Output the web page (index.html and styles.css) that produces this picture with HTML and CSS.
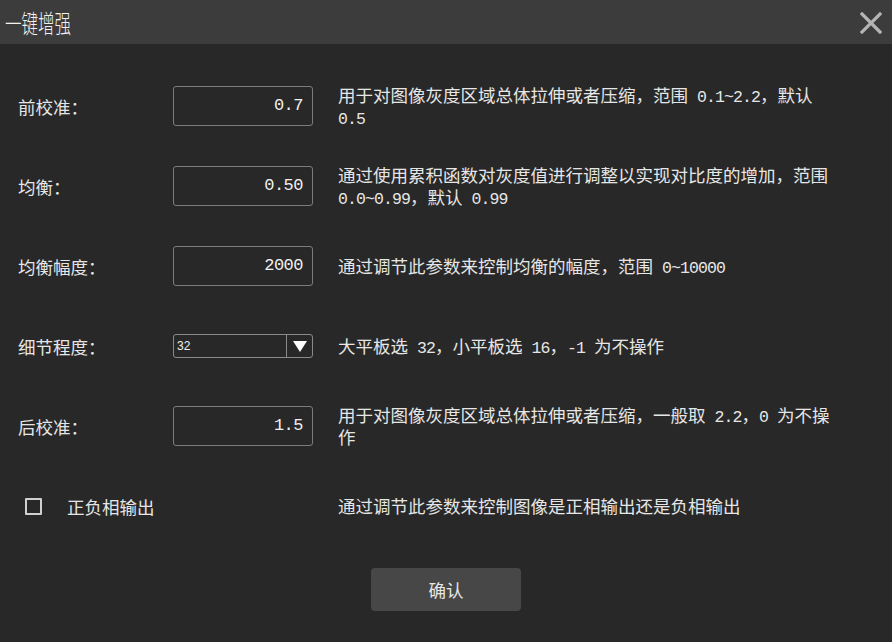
FILE: index.html
```html
<!DOCTYPE html>
<html lang="zh">
<head>
<meta charset="utf-8">
<title>一键增强</title>
<link rel="stylesheet" href="styles.css">
</head>
<body>
<div class="dialog">
  <div class="titlebar">
    <span class="title">一键增强</span>
    <svg class="close" width="22" height="22" viewBox="0 0 22 22"><path d="M2 2 L20 20 M20 2 L2 20" stroke="#b4b4b4" stroke-width="3.2" stroke-linecap="square" fill="none"/></svg>
  </div>
  <div class="content">
    <div class="row">
      <div class="label">前校准：</div>
      <div class="field"><div class="input">0.7</div></div>
      <div class="desc">用于对图像灰度区域总体拉伸或者压缩，范围<span class="num"> 0.1~2.2</span>，默认<span class="num"> 0.5</span></div>
    </div>
    <div class="row">
      <div class="label">均衡：</div>
      <div class="field"><div class="input">0.50</div></div>
      <div class="desc">通过使用累积函数对灰度值进行调整以实现对比度的增加，范围<span class="num"> 0.0~0.99</span>，默认<span class="num"> 0.99</span></div>
    </div>
    <div class="row">
      <div class="label">均衡幅度：</div>
      <div class="field"><div class="input">2000</div></div>
      <div class="desc">通过调节此参数来控制均衡的幅度，范围<span class="num"> 0~10000</span></div>
    </div>
    <div class="row">
      <div class="label">细节程度：</div>
      <div class="field">
        <div class="combo">
          <span class="combo-text">32</span>
          <span class="combo-btn"><svg width="16" height="13" viewBox="0 0 16 13"><path d="M1 1 L15 1 L8 12 Z" fill="#ffffff"/></svg></span>
        </div>
      </div>
      <div class="desc">大平板选<span class="num"> 32</span>，小平板选<span class="num"> 16</span>，<span class="num">-1 </span>为不操作</div>
    </div>
    <div class="row">
      <div class="label">后校准：</div>
      <div class="field"><div class="input">1.5</div></div>
      <div class="desc">用于对图像灰度区域总体拉伸或者压缩，一般取<span class="num"> 2.2</span>，<span class="num">0 </span>为不操作</div>
    </div>
    <div class="row">
      <div class="check-wrap">
        <span class="checkbox"></span>
        <span class="check-label">正负相输出</span>
      </div>
      <div class="desc">通过调节此参数来控制图像是正相输出还是负相输出</div>
    </div>
    <div class="actions">
      <button class="btn">确认</button>
    </div>
  </div>
</div>
</body>
</html>
```

FILE: styles.css
```css
* { box-sizing: border-box; }
html, body {
  margin: 0;
  padding: 0;
  background: #282828;
}
body {
  width: 892px;
  height: 642px;
  overflow: hidden;
  font-family: "Noto Sans CJK SC", "Noto Sans", sans-serif;
  color: #e2e2e2;
}
.dialog {
  width: 892px;
  height: 642px;
  display: flex;
  flex-direction: column;
}
.titlebar {
  height: 44px;
  background: #3c3c3c;
  display: flex;
  align-items: center;
  justify-content: space-between;
  padding: 0 10px 0 5px;
}
.title {
  font-size: 25px;
  color: #f2f2f2;
  display: inline-block;
  transform: scaleX(0.66);
  transform-origin: left center;
  font-weight: 300;
  line-height: 1;
}
.close {
  display: block;
  margin-top: 1px;
}
.content {
  flex: 1;
  padding-top: 22px;
  display: flex;
  flex-direction: column;
}
.row {
  height: 80px;
  display: flex;
  align-items: center;
}
.label {
  width: 173px;
  padding-left: 18px;
  font-size: 17.5px;
  color: #e6e6e6;
}
.field {
  width: 140px;
  margin-right: 25px;
}
.input {
  height: 40px;
  border: 1px solid #7c7c7c;
  border-radius: 3px;
  text-align: right;
  padding-right: 9px;
  line-height: 38px;
  font-size: 17px;
  font-family: "Liberation Mono", "DejaVu Sans Mono", monospace;
  color: #f0f0f0;
  letter-spacing: -0.5px;
}
.combo {
  height: 24px;
  border: 1px solid #8a8a8a;
  border-radius: 3px;
  display: flex;
  align-items: center;
}
.combo-text {
  flex: 1;
  font-size: 12px;
  font-family: "Liberation Sans", sans-serif;
  padding-left: 3px;
  color: #f0f0f0;
}
.combo-btn {
  width: 26px;
  height: 100%;
  border-left: 1px solid #8a8a8a;
  display: flex;
  align-items: center;
  justify-content: center;
}
.combo-btn svg { display: block; }
.desc {
  width: 505px;
  font-size: 17.5px;
  line-height: 22px;
  color: #e6e6e6;
}
.num {
  font-family: "Liberation Mono", "DejaVu Sans Mono", monospace;
  font-size: 16.5px;
  letter-spacing: -0.9px;
  line-height: 1;
}
.check-wrap {
  width: 338px;
  display: flex;
  align-items: center;
  padding-left: 25px;
}
.checkbox {
  width: 17px;
  height: 17px;
  border: 2px solid #d0d0d0;
  border-radius: 1px;
  margin-right: 25px;
}
.check-label {
  font-size: 17.5px;
  color: #e6e6e6;
}
.actions {
  display: flex;
  justify-content: center;
  padding-top: 22px;
}
.btn {
  width: 150px;
  height: 43px;
  background: #474747;
  border: none;
  border-radius: 4px;
  color: #e8e8e8;
  font-family: "Noto Sans CJK SC", sans-serif;
  font-size: 17.5px;
  padding: 0;
}
```
